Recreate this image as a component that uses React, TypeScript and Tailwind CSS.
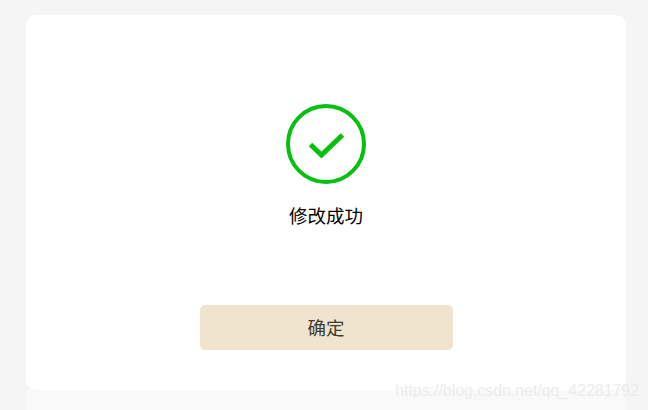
export default function App() {
  return (
    <div className="relative flex h-[410px] w-[648px] flex-col overflow-hidden bg-[#f5f5f5] pl-[26px] pr-[22px] pt-[15px]" style={{ fontFamily: '"Noto Sans CJK SC", "Liberation Sans", sans-serif' }}>
      <div className="flex h-[375px] flex-col items-center rounded-[10px] bg-white pt-[89px]">
        <svg width="80" height="80" viewBox="0 0 80 80" fill="none" className="shrink-0">
          <circle cx="40" cy="40" r="38" stroke="#06c00f" strokeWidth="4" />
          <path d="M24.5 40.5L35.5 51L56.5 31" stroke="#06c00f" strokeWidth="5" />
        </svg>
        <div className="mt-[16px] text-[18.5px] leading-[30px] text-black">修改成功</div>
        <button className="mt-[75px] h-[45px] w-[253px] rounded-[5px] bg-[#f0e4cf] text-[18.5px] text-[#3f3a33]">确定</button>
      </div>
      <div className="flex-1 bg-[#f9f9f9]" />
      <div className="absolute right-[9px] top-[381px] text-[15.9px] leading-[20px] text-[#ececec]" style={{ fontFamily: '"Liberation Sans", sans-serif' }}>https://blog.csdn.net/qq_42281792</div>
    </div>
  );
}
